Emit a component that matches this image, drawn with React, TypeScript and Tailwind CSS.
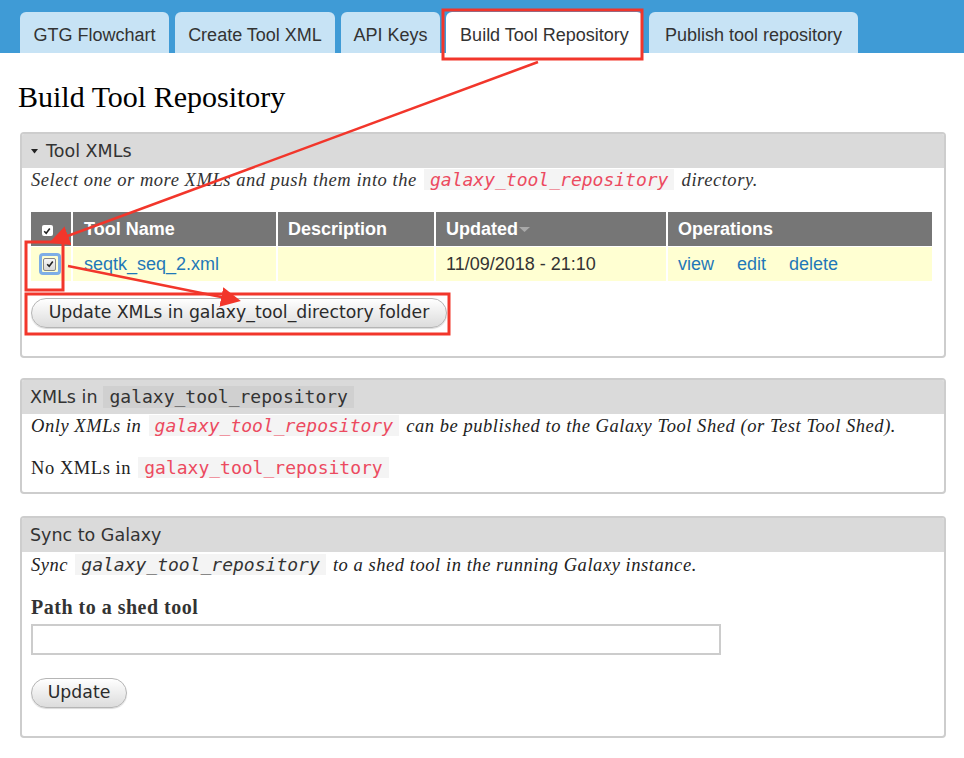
import React from "react";

const sans = "font-['Liberation_Sans',Arial,sans-serif]";
const ui = "font-['DejaVu_Sans',sans-serif]";
const serif = "font-['Liberation_Serif',serif]";
const mono = "font-['DejaVu_Sans_Mono',monospace]";

const tabs = [
  { label: "GTG Flowchart", w: "w-[149px]" },
  { label: "Create Tool XML", w: "w-[160px]" },
  { label: "API Keys", w: "w-[99px]" },
  { label: "Build Tool Repository", w: "w-[197px]" },
  { label: "Publish tool repository", w: "w-[209px]" },
];

const body = `${serif} text-[18.5px] leading-[26px] tracking-[0.55px]`;

const Code = ({
  children,
  tone = "pink",
  italic = false,
  className = "mx-[2px]",
}: {
  children: React.ReactNode;
  tone?: "pink" | "dark" | "header";
  italic?: boolean;
  className?: string;
}) => {
  const toneClass =
    tone === "pink"
      ? "bg-[#f4f4f4] text-[#ec4a60]"
      : tone === "dark"
        ? "bg-[#f4f4f4] text-[#333]"
        : "bg-[#d0d0d0] text-[#333]";
  return (
    <code
      className={`${mono} ${toneClass} ${italic ? "italic" : ""} px-[6px] text-[18px] leading-[22px] tracking-normal ${className}`}
    >
      {children}
    </code>
  );
};

const Panel = ({
  title,
  children,
  collapsible = false,
}: {
  title: React.ReactNode;
  children: React.ReactNode;
  collapsible?: boolean;
}) => (
  <section className="border-2 border-[#cdcdcd] rounded-[4px] overflow-hidden bg-white">
    <div
      className={`${ui} bg-[#dadada] h-[34px] flex items-center pl-[8px] text-[17.5px] text-[#333]`}
    >
      {collapsible && (
        <svg width="7" height="5" viewBox="0 0 7 5" className="mr-[8px] ml-[1px]">
          <path d="M0 0 L7 0 L3.5 4.5 Z" fill="#222" />
        </svg>
      )}
      {title}
    </div>
    {children}
  </section>
);

const Button = ({ children, className = "" }: { children: React.ReactNode; className?: string }) => (
  <button
    className={`${ui} h-[30px] rounded-full border border-[#b5b5b5] bg-gradient-to-b from-[#ffffff] to-[#dcdcdc] shadow-[0_1px_1px_rgba(0,0,0,0.15)] text-[17.3px] text-[#2b2b2b] ${className}`}
  >
    {children}
  </button>
);

const Tick = () => (
  <svg width="8" height="8" viewBox="0 0 8 8">
    <path d="M1.2 4.2 L3.2 6.2 L6.8 1.5" stroke="#222" strokeWidth="1.6" fill="none" />
  </svg>
);

const CheckBox = ({ small = false }: { small?: boolean }) =>
  small ? (
    <span className="inline-flex w-[11px] h-[11px] bg-white rounded-[2px] items-center justify-center">
      <Tick />
    </span>
  ) : (
    <span className="inline-flex w-[22px] h-[22px] rounded-[4px] border-[3px] border-[#7eaee6] items-center justify-center">
      <span className="w-[13px] h-[13px] bg-gradient-to-b from-[#f8f8f8] to-[#d8d8d8] border border-[#888] rounded-[2px] flex items-center justify-center">
        <Tick />
      </span>
    </span>
  );

export default function App() {
  return (
    <div className="relative w-[964px] h-[758px] bg-white overflow-hidden">
      {/* Tab bar */}
      <nav className="bg-[#3f9bd6] h-[53px] flex items-end gap-[6px] pl-[20px]">
        {tabs.map((t, i) => (
          <div
            key={t.label}
            className={`${sans} ${t.w} h-[41px] pt-[5px] rounded-t-[6px] flex items-center justify-center text-[18px] text-[#333] ${
              i === 3 ? "bg-white" : "bg-[#c7e3f5]"
            }`}
          >
            {t.label}
          </div>
        ))}
      </nav>

      <main className="pl-[20px] pr-[18px]">
        <h1 className={`${serif} text-[30px] leading-[34px] text-black mt-[27px] mb-[18px] ml-[-2px]`}>
          Build Tool Repository
        </h1>

        <Panel title="Tool XMLs" collapsible>
          <div className="pl-[9px] pr-[12px] pb-[28px]">
            <p className={`${body} italic text-[#333] mt-[-1px]`}>
              Select one or more XMLs and push them into the <Code italic>galaxy_tool_repository</Code>{" "}
              directory.
            </p>

            <div
              className={`${sans} mt-[19px] grid grid-cols-[40px_203px_156px_230px_264px] gap-x-[2px] gap-y-[1px] text-[18px]`}
            >
              <div className="bg-[#767676] h-[34px] flex items-center justify-center pt-[3px] pr-[8px]">
                <CheckBox small />
              </div>
              <div className="bg-[#767676] h-[34px] flex items-center pl-[11px] font-bold text-white">
                Tool Name
              </div>
              <div className="bg-[#767676] h-[34px] flex items-center pl-[10px] font-bold text-white">
                Description
              </div>
              <div className="bg-[#767676] h-[34px] flex items-center pl-[10px] font-bold text-white">
                Updated
                <svg width="11" height="6" viewBox="0 0 11 6" className="ml-[1px] mt-[2px]">
                  <path d="M0 0 L11 0 L5.5 5 Z" fill="#a9a9a9" />
                </svg>
              </div>
              <div className="bg-[#767676] h-[34px] flex items-center pl-[10px] font-bold text-white">
                Operations
              </div>

              <div className="bg-[#ffffd2] h-[34px] flex items-center justify-center pr-[3px]">
                <CheckBox />
              </div>
              <div className="bg-[#ffffd2] h-[34px] flex items-center pl-[11px] text-[#1f78b8]">
                seqtk_seq_2.xml
              </div>
              <div className="bg-[#ffffd2] h-[34px]" />
              <div className="bg-[#ffffd2] h-[34px] flex items-center pl-[10px] text-[#333]">
                11/09/2018 - 21:10
              </div>
              <div className="bg-[#ffffd2] h-[34px] flex items-center pl-[10px] gap-[23px] text-[#1f78b8]">
                <span>view</span>
                <span>edit</span>
                <span>delete</span>
              </div>
            </div>

            <Button className="mt-[17px] w-[416px]">Update XMLs in galaxy_tool_directory folder</Button>
          </div>
        </Panel>

        <div className="h-[20px]" />

        <Panel
          title={
            <>
              XMLs in
              <Code tone="header" className="ml-[6px]">
                galaxy_tool_repository
              </Code>
            </>
          }
        >
          <div className="pl-[9px] pr-[12px] pb-[11px] text-[#222]">
            <p className={`${body} italic mt-[-1px]`}>
              Only XMLs in <Code italic>galaxy_tool_repository</Code> can be published to the Galaxy Tool
              Shed (or Test Tool Shed).
            </p>
            <p className={`${body} mt-[16px]`}>
              No XMLs in <Code>galaxy_tool_repository</Code>
            </p>
          </div>
        </Panel>

        <div className="h-[22px]" />

        <Panel title="Sync to Galaxy">
          <div className="pl-[9px] pr-[12px] pb-[28px] text-[#222]">
            <p className={`${body} italic mt-[0px]`}>
              Sync <Code tone="dark" italic>galaxy_tool_repository</Code> to a shed tool in the running
              Galaxy instance.
            </p>
            <label
              className={`${serif} block font-bold text-[20px] tracking-[0.5px] leading-[24px] mt-[17px] text-[#333]`}
            >
              Path to a shed tool
            </label>
            <input className="block mt-[5px] w-[690px] h-[31px] border-2 border-[#cccccc] outline-none" />
            <Button className="mt-[23px] w-[96px]">Update</Button>
          </div>
        </Panel>
      </main>

      {/* Annotation overlay */}
      <svg
        className="absolute inset-0 pointer-events-none"
        width="964"
        height="758"
        viewBox="0 0 964 758"
      >
        <defs>
          <marker id="head" markerWidth="8" markerHeight="8" refX="6" refY="4" orient="auto" markerUnits="strokeWidth">
            <path d="M0 0 L8 4 L0 8 Z" fill="#f2362b" />
          </marker>
        </defs>
        <rect x="443" y="10" width="199" height="49" fill="none" stroke="#f2362b" strokeWidth="3" />
        <rect x="26" y="242" width="37" height="48" fill="none" stroke="#f2362b" strokeWidth="3" />
        <rect x="26" y="294" width="423" height="40" fill="none" stroke="#f2362b" strokeWidth="3" />
        <line x1="538" y1="62" x2="54" y2="241" stroke="#f2362b" strokeWidth="2.5" markerEnd="url(#head)" />
        <line x1="68" y1="266" x2="236" y2="300" stroke="#f2362b" strokeWidth="2.5" markerEnd="url(#head)" />
      </svg>
    </div>
  );
}
